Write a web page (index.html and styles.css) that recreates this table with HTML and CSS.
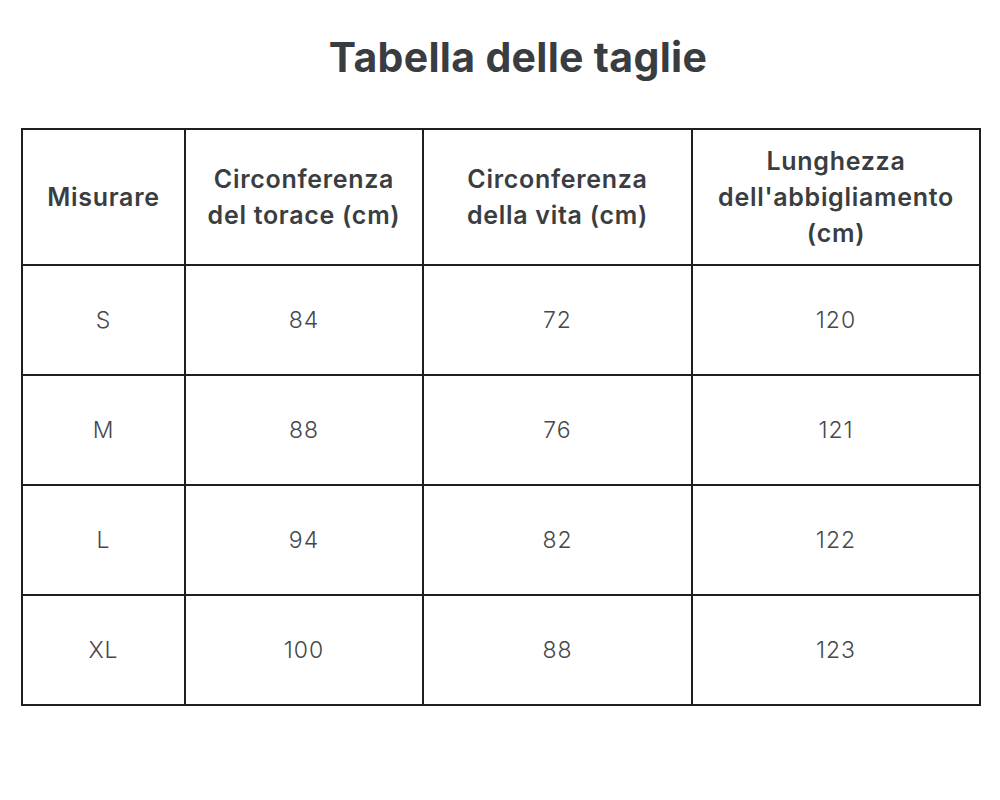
FILE: index.html
```html
<!DOCTYPE html>
<html lang="it">
<head>
<meta charset="utf-8">
<link rel="stylesheet" href="styles.css">
</head>
<body>
<h1 class="title">Tabella delle taglie</h1>
<table class="sizes">
  <colgroup>
    <col class="c1"><col class="c2"><col class="c3"><col class="c4">
  </colgroup>
  <thead>
    <tr>
      <th>Misurare</th>
      <th>Circonferenza<br>del torace (cm)</th>
      <th>Circonferenza<br>della vita (cm)</th>
      <th>Lunghezza<br>dell'abbigliamento<br>(cm)</th>
    </tr>
  </thead>
  <tbody>
    <tr><td>S</td><td>84</td><td>72</td><td>120</td></tr>
    <tr><td>M</td><td>88</td><td>76</td><td>121</td></tr>
    <tr><td>L</td><td>94</td><td>82</td><td>122</td></tr>
    <tr><td>XL</td><td>100</td><td>88</td><td>123</td></tr>
  </tbody>
</table>
</body>
</html>
```
FILE: styles.css
```css
html, body {
  margin: 0;
  padding: 0;
  background: #ffffff;
}
body {
  font-family: "Inter", "Noto Sans", sans-serif;
  color: #3b3e42;
}
.title {
  margin: 0;
  padding-top: 31px;
  height: 98px;
  box-sizing: border-box;
  text-align: center;
  font-size: 41px;
  line-height: 52px;
  font-weight: 700;
  color: #393c40;
  padding-left: 36px;
  letter-spacing: 0.3px;
}
.sizes {
  margin: 30px 0 0 21px;
  border-collapse: collapse;
  table-layout: fixed;
  width: 958px;
}
.c1 { width: 163px; }
.c2 { width: 238px; }
.c3 { width: 269px; }
.c4 { width: 288px; }
.sizes th, .sizes td {
  border: 2px solid #1f1f1f;
  text-align: center;
  vertical-align: middle;
  padding: 0;
}
.sizes th {
  height: 134px;
  font-size: 25px;
  line-height: 36px;
  font-weight: 600;
  letter-spacing: 0.7px;
  color: #3a3d41;
}
.sizes td {
  height: 108px;
  font-size: 23px;
  font-weight: 300;
  letter-spacing: 1px;
  color: #45484c;
}
```
